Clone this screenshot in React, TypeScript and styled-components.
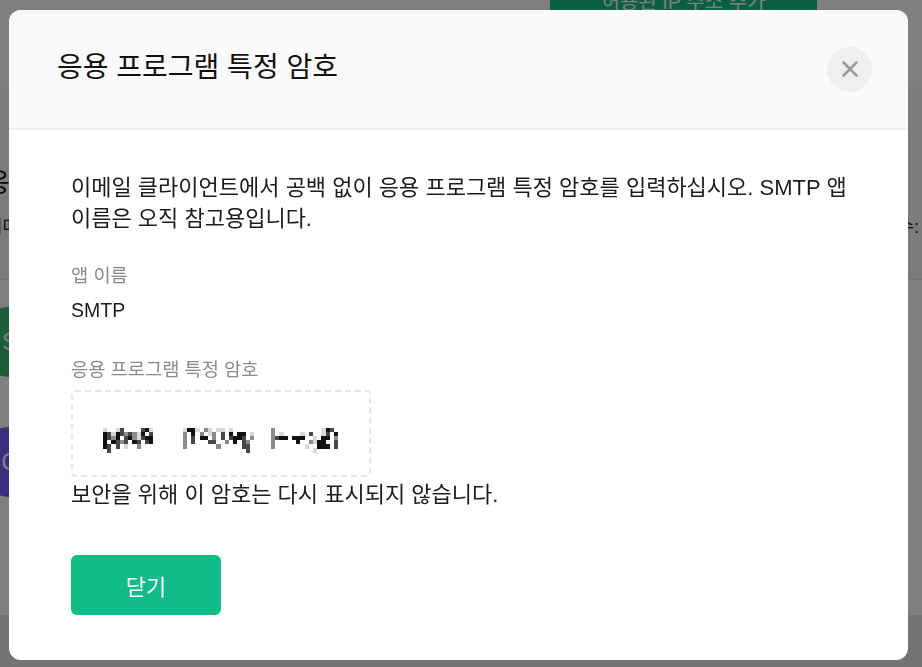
import React from "react";
import styled, { createGlobalStyle } from "styled-components";

const FONT = `"Liberation Sans", "Noto Sans CJK KR", sans-serif`;

const Global = createGlobalStyle`
  html, body { margin: 0; padding: 0; }
  body { font-family: ${FONT}; background: #fff; }
  * { box-sizing: border-box; }
`;

/* ---------- background page ---------- */
const Page = styled.div`
  width: 922px;
  height: 667px;
  overflow: hidden;
  background: #fff;
  display: flex;
  flex-direction: column;
`;

const TopBar = styled.div`
  height: 87px;
  flex: none;
  display: flex;
  justify-content: flex-end;
  padding-right: 105px;
`;

const AddIpButton = styled.div`
  width: 267px;
  height: 50px;
  margin-top: -25px;
  background: #12bc86;
  color: #fff;
  font-size: 20px;
  display: flex;
  align-items: center;
  justify-content: center;
  border-radius: 4px;
`;

const Hero = styled.div`
  height: 193px;
  flex: none;
  background: #f6f6f6;
  border-bottom: 1px solid #e2e2e2;
  padding: 81px 0 0 0;
  margin-left: -14px;
`;

const HeroTitle = styled.div`
  font-size: 26px;
  line-height: 30px;
  color: #111;
`;

const HeroSub = styled.div`
  margin-top: 16px;
  font-size: 18px;
  line-height: 26px;
  color: #222;
  display: flex;
  justify-content: space-between;
  margin-right: -12px;
`;

const List = styled.div`
  flex: 1;
  padding-top: 27px;
  display: flex;
  flex-direction: column;
  gap: 50px;
`;

const Avatar = styled.div<{ $bg: string }>`
  width: 70px;
  height: 70px;
  border-radius: 50%;
  margin-left: -25px;
  background: ${(p) => p.$bg};
  color: #fff;
  font-size: 24px;
  display: flex;
  align-items: center;
  justify-content: center;
`;

const Footer = styled.div`
  height: 52px;
  flex: none;
  background: #e8e8e8;
`;

/* ---------- overlay + modal ---------- */
const Overlay = styled.div`
  position: fixed;
  inset: 0;
  background: rgba(0, 0, 0, 0.5);
  padding: 10px 14px 0 9px;
  display: flex;
  align-items: flex-start;
  justify-content: flex-start;
`;

const Modal = styled.div`
  width: 899px;
  background: #fff;
  border-radius: 12px;
  overflow: hidden;
  display: flex;
  flex-direction: column;
`;

const Header = styled.div`
  height: 120px;
  background: #fafafa;
  border-bottom: 2px solid #efefef;
  display: flex;
  align-items: center;
  justify-content: space-between;
  padding: 0 36px 0 48px;
`;

const Title = styled.h2`
  margin: 0 0 2px 0;
  font-size: 28px;
  line-height: 36px;
  font-weight: 400;
  color: #111;
`;

const CloseButton = styled.button`
  width: 45px;
  height: 45px;
  border-radius: 50%;
  border: none;
  background: #efefef;
  padding: 0;
  display: flex;
  align-items: center;
  justify-content: center;
  cursor: pointer;
`;

const Body = styled.div`
  padding: 42px 50px 45px 62px;
  display: flex;
  flex-direction: column;
  align-items: flex-start;
`;

const Text = styled.p<{ $mt?: number }>`
  margin: ${(p) => p.$mt ?? 0}px 0 0 0;
  font-size: 22px;
  line-height: 31px;
  color: #1c1c1c;
`;

const Label = styled.div<{ $mt: number }>`
  margin-top: ${(p) => p.$mt}px;
  font-size: 18.7px;
  line-height: 26px;
  color: #8a8a8a;
`;

const Value = styled.div`
  margin-top: 6px;
  font-size: 19.5px;
  line-height: 30px;
  color: #1c1c1c;
`;

const SecretBox = styled.div`
  margin-top: 7px;
  width: 300px;
  height: 87px;
  border: 2px dashed #e6e6e6;
  border-radius: 4px;
  padding: 36px 0 0 30px;
  display: flex;
  align-items: flex-start;
`;

const CloseAction = styled.button`
  margin-top: 45px;
  width: 150px;
  height: 60px;
  border: none;
  border-radius: 6px;
  background: #12bc86;
  color: #fff;
  font-family: ${FONT};
  font-size: 22px;
  cursor: pointer;
`;

/* pixelated (redacted) password mosaic */
const SHADES: Record<string, string> = {
  "1": "#d8d8d8",
  "2": "#8c8c8c",
  "3": "#474747",
  "4": "#121212",
};

const mk = (a: string, b: string, c: string) =>
  (a.padEnd(19, ".") + b.padEnd(21, ".") + c).padEnd(56, ".").slice(0, 56);

const MOSAIC = [
  mk("1..13....341", "1441.21.11.1.....", "2...........143."),
  mk("4314323214.3", "2.4.2.12.3.4.44.1", "2.1....1.3..13.4"),
  mk("4324.3421344", "2.3.44.2.3.3443.2", "2344.444..1.44.24"),
  mk("4.4323.43.34", "2.3...33..2.4.32.", "2.....4..2144..3"),
  mk("43.3.1..2...", "2.......2.....33.", "2.......1..444.3"),
  mk(".3..........", "...............3.", "..........1....."),
];

const CW = 4.2;
const CH = 4.1;

function Mosaic() {
  const rects: React.ReactNode[] = [];
  MOSAIC.forEach((row, r) => {
    row.split("").forEach((ch, c) => {
      const fill = SHADES[ch];
      if (fill)
        rects.push(
          <rect key={`${r}-${c}`} x={c * CW} y={r * CH} width={CW + 0.05} height={CH + 0.05} fill={fill} />
        );
    });
  });
  return (
    <svg width={56 * CW} height={6 * CH} viewBox={`0 0 ${56 * CW} ${6 * CH}`} shapeRendering="crispEdges" aria-label="password">
      {rects}
    </svg>
  );
}

export default function App() {
  return (
    <>
      <Global />
      <Page>
        <TopBar>
          <AddIpButton>허용된 IP 주소 추가</AddIpButton>
        </TopBar>
        <Hero>
          <HeroTitle>응용 프로그램 특정 암호</HeroTitle>
          <HeroSub>
            <span>이메일 클라이언트에서 사용할 암호를 생성합니다.</span>
            <span>최대 개수: 9</span>
          </HeroSub>
        </Hero>
        <List>
          <Avatar $bg="#36bc6c">S</Avatar>
          <Avatar $bg="#785cf4">C</Avatar>
        </List>
        <Footer />
      </Page>
      <Overlay>
        <Modal role="dialog">
          <Header>
            <Title>응용 프로그램 특정 암호</Title>
            <CloseButton aria-label="닫기">
              <svg width="16" height="16" viewBox="0 0 16 16">
                <path d="M1.5 1.5 L14.5 14.5 M14.5 1.5 L1.5 14.5" stroke="#9a9a9a" strokeWidth="2.5" strokeLinecap="round" />
              </svg>
            </CloseButton>
          </Header>
          <Body>
            <Text>
              이메일 클라이언트에서 공백 없이 응용 프로그램 특정 암호를 입력하십시오. SMTP 앱 이름은 오직 참고용입니다.
            </Text>
            <Label $mt={29}>앱 이름</Label>
            <Value>SMTP</Value>
            <Label $mt={32}>응용 프로그램 특정 암호</Label>
            <SecretBox>
              <Mosaic />
            </SecretBox>
            <Text $mt={2}>보안을 위해 이 암호는 다시 표시되지 않습니다.</Text>
            <CloseAction>닫기</CloseAction>
          </Body>
        </Modal>
      </Overlay>
    </>
  );
}
